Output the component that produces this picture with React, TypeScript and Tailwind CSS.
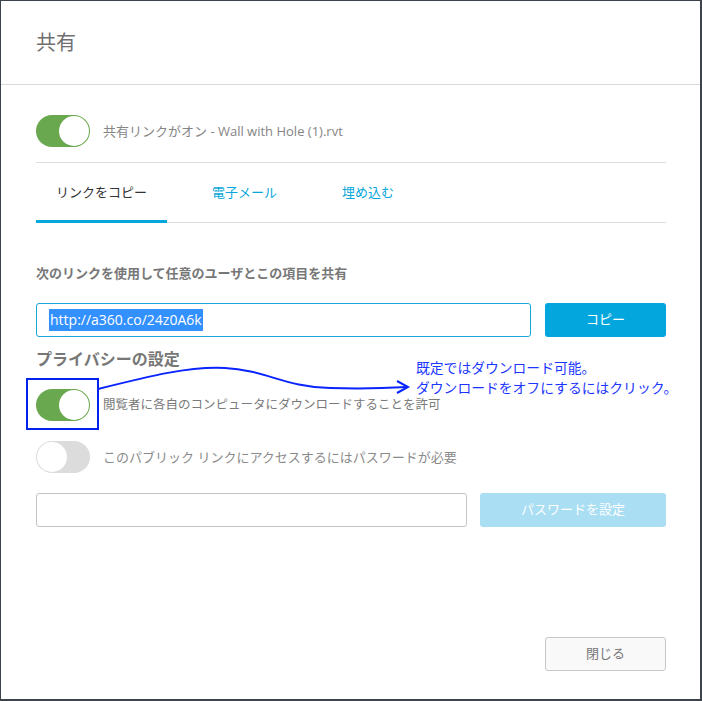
import React from "react";

const font = { fontFamily: '"Open Sans", "Noto Sans CJK JP", sans-serif' };

function Toggle({ on }: { on: boolean }) {
  return (
    <div
      className={
        "flex h-[32px] w-[54px] shrink-0 items-center rounded-full p-px " +
        (on ? "justify-end bg-[#6aa84f]" : "justify-start bg-[#dcdcdc]")
      }
    >
      <div className="h-[30px] w-[30px] rounded-full bg-white" />
    </div>
  );
}

export default function App() {
  return (
    <div
      className="relative flex h-[701px] w-[702px] flex-col border-t border-l border-r-2 border-b-2 border-[#3d434a] bg-white"
      style={font}
    >
      {/* header */}
      <div className="flex h-[84px] shrink-0 items-center border-b border-[#dadada] pl-[35px]">
        <h1 className="text-[20px] leading-none text-[#6f6f6f]">共有</h1>
      </div>

      <div className="flex flex-1 flex-col pl-[35px] pr-[34px]">
        <div className="flex items-center gap-[13px] border-b border-[#dedede] pt-[30px] pb-[15px]">
          <Toggle on />
          <span className="text-[13px] leading-[18px] text-[#858585]">
            共有リンクがオン - Wall with Hole (1).rvt
          </span>
        </div>

        {/* tabs */}
        <div className="flex gap-[25px] border-b border-[#dedede]">
          <div className="-mb-px flex h-[60px] items-center border-b-[3px] border-[#06a7dd] px-[20px] pt-[3px] text-[13px] text-[#333]">
            リンクをコピー
          </div>
          <div className="flex h-[59px] items-center px-[20px] text-[13px] text-[#06a7dd]">
            電子メール
          </div>
          <div className="flex h-[59px] items-center px-[20px] text-[13px] text-[#06a7dd]">
            埋め込む
          </div>
        </div>

        <p className="mt-[41px] text-[13px] leading-[18px] font-semibold text-[#777]">
          次のリンクを使用して任意のユーザとこの項目を共有
        </p>

        <div className="mt-[21px] flex h-[34px] gap-[14px]">
          <div className="flex flex-1 items-center rounded-[3px] border border-[#1aa6d9] pl-[12px]">
            <span className="bg-[#3390ff] px-px text-[14px] leading-[22px] text-white">
              http://a360.co/24z0A6k
            </span>
          </div>
          <button className="w-[121px] rounded-[3px] bg-[#03a7dd] text-[13px] text-white">
            コピー
          </button>
        </div>

        <h2 className="mt-[11px] text-[16px] leading-[22px] font-bold text-[#777]">
          プライバシーの設定
        </h2>

        <div className="mt-[19px] flex items-center gap-[13px]">
          <Toggle on />
          <span className="text-[12.5px] leading-[18px] text-[#7a7a7a]">
            閲覧者に各自のコンピュータにダウンロードすることを許可
          </span>
        </div>

        <div className="mt-[20px] flex items-center gap-[13px]">
          <Toggle on={false} />
          <span className="text-[13px] leading-[18px] text-[#8a8a8a]">
            このパブリック リンクにアクセスするにはパスワードが必要
          </span>
        </div>

        <div className="mt-[20px] flex h-[34px] gap-[13px]">
          <div className="flex-1 rounded-[3px] border border-[#c4c4c4]" />
          <button className="w-[186px] rounded-[3px] bg-[#a9def3] text-[13px] text-white">
            パスワードを設定
          </button>
        </div>

        <div className="mt-auto flex justify-end pb-[28px]">
          <button className="h-[34px] w-[121px] rounded-[3px] border border-[#c8c8c8] bg-[#f9f9f9] text-[13px] text-[#777]">
            閉じる
          </button>
        </div>
      </div>

      {/* annotation */}
      <div className="pointer-events-none absolute left-[25px] top-[377px] h-[52px] w-[73px] border-2 border-[#0022ee]" />
      <svg
        className="pointer-events-none absolute left-[-1px] top-[-1px]"
        width="702"
        height="701"
        viewBox="0 0 702 701"
        fill="none"
      >
        <path
          d="M98 389 C150 376 190 366 225 368 C265 370 285 387 330 388 C360 389 390 388 407 387"
          stroke="#0a24ff"
          strokeWidth="2"
        />
        <path d="M397 381 L408 387 L397 393" stroke="#0a24ff" strokeWidth="2" />
      </svg>
      <div
        className="pointer-events-none absolute left-[415px] top-[356px] text-[13.8px] leading-[20px] text-[#1a35ff]"
        style={{ fontFamily: '"Noto Sans CJK JP", sans-serif' }}
      >
        <div>既定ではダウンロード可能。</div>
        <div>ダウンロードをオフにするにはクリック。</div>
      </div>
    </div>
  );
}
